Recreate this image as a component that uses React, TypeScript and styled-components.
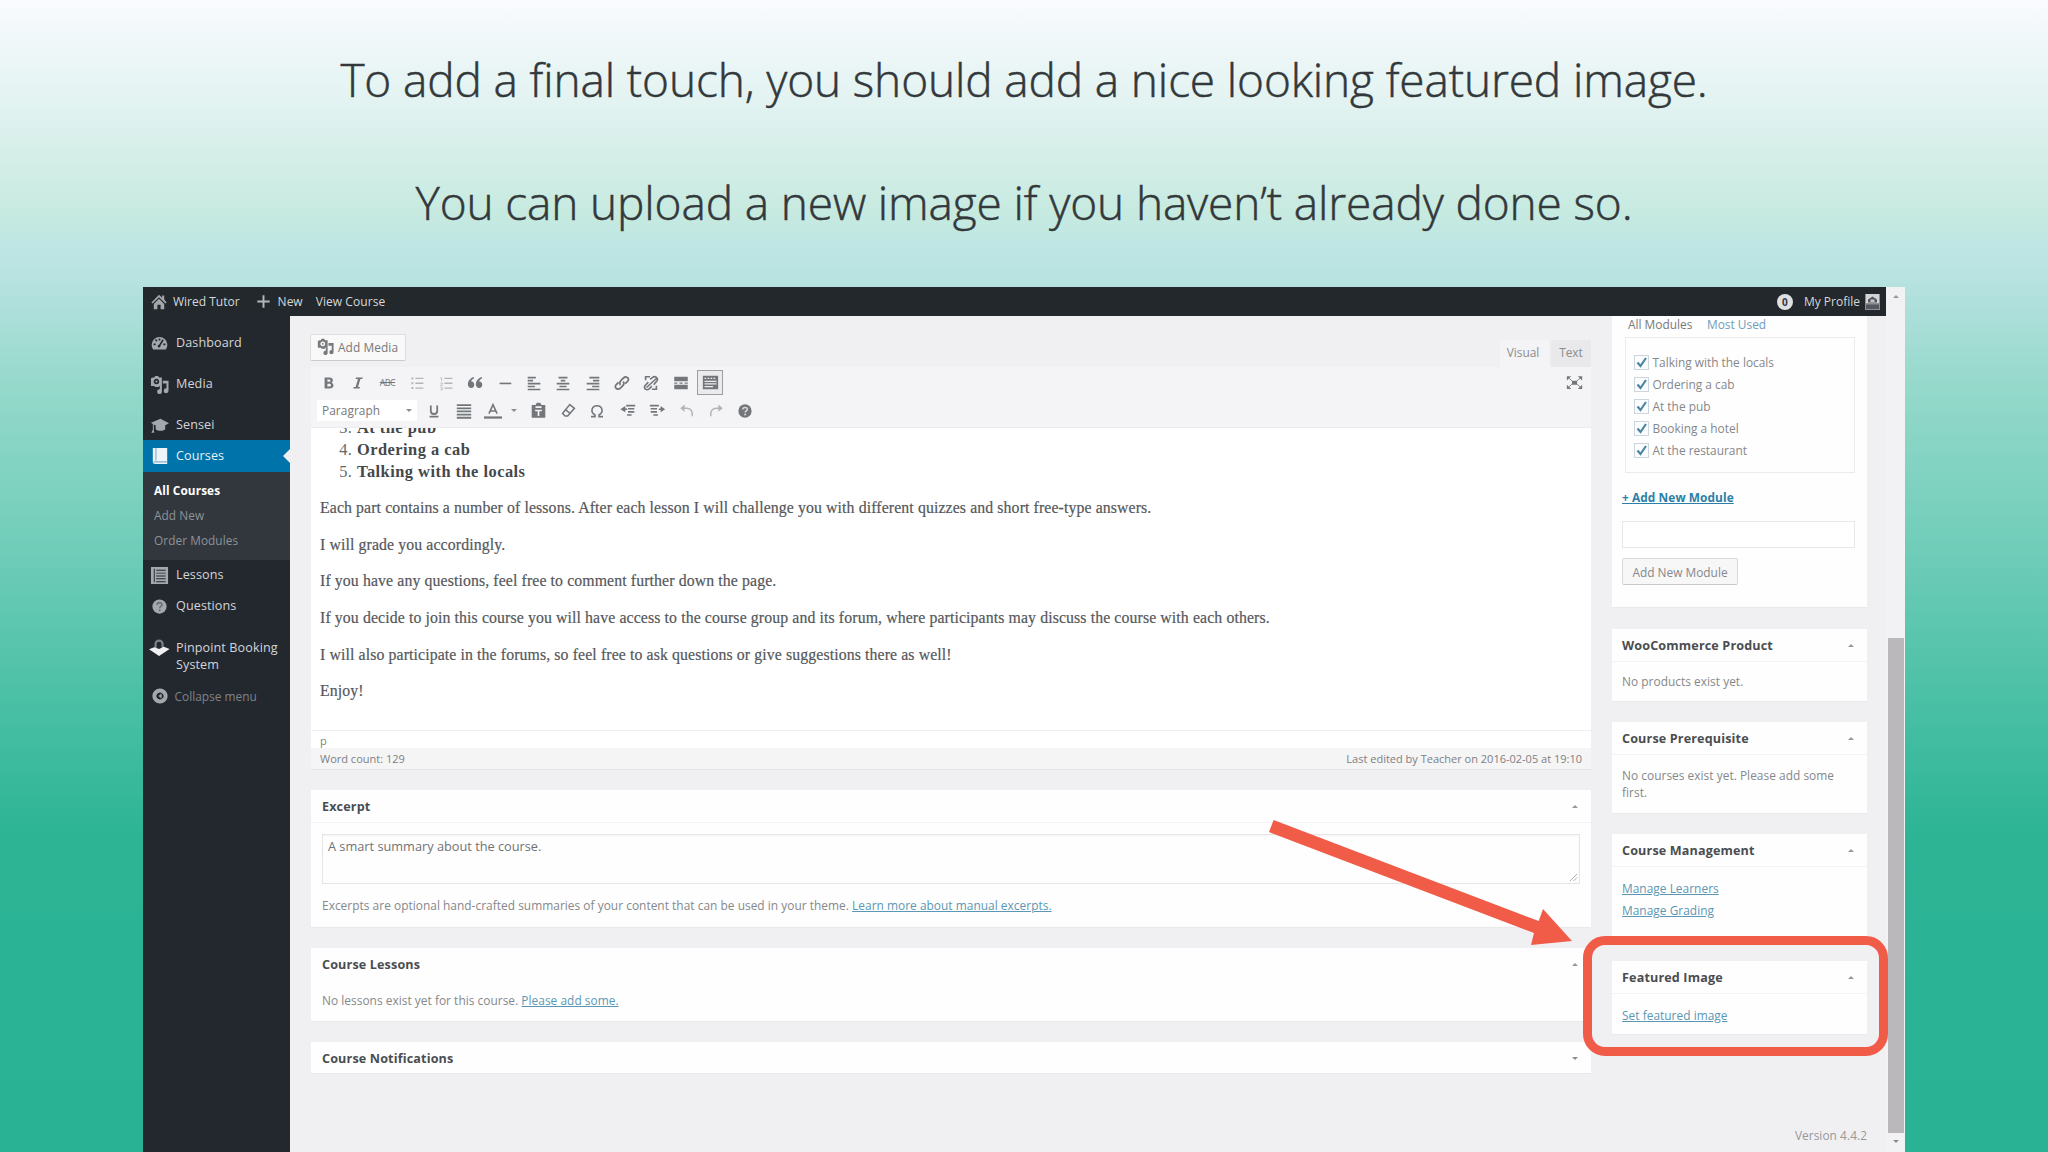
import React from "react";
import styled, { createGlobalStyle } from "styled-components";

const Global = createGlobalStyle`
  *, *::before, *::after { box-sizing: border-box; }
  body { margin: 0; overflow: hidden; }
`;

const sans = `"Open Sans", "Noto Sans", sans-serif`;
const serif = `"Liberation Serif", Georgia, serif`;
const accent = "#f15c48";

const Slide = styled.div`
  width: 2048px;
  height: 1152px;
  position: relative;
  overflow: hidden;
  display: flex;
  flex-direction: column;
  align-items: center;
  background: linear-gradient(#fafbff 0px, #f3f8fb 25px, #e5f4f3 90px, #d8efea 145px, #c6eae0 215px, #bfe6e4 245px, #b4e1de 290px, #95d9cb 385px, #6dccb7 560px, #4ac0a5 700px, #2cb495 840px, #29b294 1152px);
  font-family: ${sans};
`;

const Captions = styled.div`
  height: 287px;
  padding-top: 17.5px;
  display: flex;
  flex-direction: column;
  align-items: center;
`;

const Caption = styled.p`
  margin: 0;
  height: 123px;
  line-height: 122px;
  font-size: 46px;
  font-weight: 300;
  letter-spacing: -0.14px;
  -webkit-text-stroke: 0.5px #33383b;
  color: #33383b;
  white-space: nowrap;
`;

const Screen = styled.div`
  width: 1762px;
  height: 865px;
  display: flex;
  background: #f0f0f2;
`;

const Page = styled.div`
  width: 1743px;
  display: flex;
  flex-direction: column;
`;

const AdminBar = styled.header`
  height: 29px;
  flex: none;
  display: flex;
  align-items: center;
  padding: 0 6px 0 8px;
  background: #22282c;
  color: #d6d8d9;
  font-size: 12px;
`;

const BarItem = styled.span<{ $left?: number; $ls?: number }>`
  margin-left: ${(p) => p.$left ?? 0}px;
  letter-spacing: ${(p) => p.$ls ?? 0}px;
  white-space: nowrap;
`;

const Spacer = styled.span`
  flex: 1;
`;

const CountBubble = styled.span`
  width: 16px;
  height: 16px;
  border-radius: 50%;
  background: #dfe0e1;
  color: #33383c;
  font-size: 10px;
  font-weight: 700;
  line-height: 16px;
  text-align: center;
`;

const Body = styled.div`
  flex: 1;
  display: flex;
  min-height: 0;
`;

const Sidebar = styled.nav`
  width: 147px;
  flex: none;
  padding-top: 12px;
  background: #23282f;
`;

const MenuItem = styled.div<{ $h: number; $gap?: number; $active?: boolean; $muted?: boolean }>`
  position: relative;
  height: ${(p) => p.$h}px;
  margin-top: ${(p) => p.$gap ?? 0}px;
  padding-left: 6px;
  display: flex;
  align-items: center;
  gap: ${(p) => (p.$muted ? 4.5 : 6)}px;
  line-height: 16.5px;
  letter-spacing: ${(p) => (p.$muted ? 0 : 0.1)}px;
  background: ${(p) => (p.$active ? "#0073aa" : "transparent")};
  color: ${(p) => (p.$active ? "#e6f1f7" : p.$muted ? "#7f8286" : "#d3d5d7")};
  font-size: ${(p) => (p.$muted ? 11.9 : 12.6)}px;

  &::after {
    content: "";
    display: ${(p) => (p.$active ? "block" : "none")};
    position: absolute;
    right: 0;
    top: 9px;
    border: 7px solid transparent;
    border-left: 0;
    border-right-color: #f0f0f2;
  }
`;

const MenuIcon = styled.span<{ $raised?: boolean }>`
  width: 21px;
  flex: none;
  display: flex;
  justify-content: center;
  padding-bottom: ${(p) => (p.$raised ? 18 : 0)}px;
  color: #a4a8ac;
`;

const SubMenu = styled.div`
  height: 88px;
  padding: 6px 0 0 11px;
  background: #32373e;
`;

const SubItem = styled.div<{ $current?: boolean }>`
  height: 25px;
  line-height: 25px;
  font-size: 11.8px;
  letter-spacing: ${(p) => (p.$current ? 0.1 : 0.08)}px;
  font-weight: ${(p) => (p.$current ? 700 : 400)};
  color: ${(p) => (p.$current ? "#fff" : "#8f9296")};
`;

const Main = styled.main`
  width: 1301px;
  flex: none;
  padding: 18px 0 0 21px;
`;

const MediaRow = styled.div`
  height: 33px;
  display: flex;
  justify-content: space-between;
`;

const MediaButton = styled.button`
  width: 96px;
  height: 27px;
  margin: 0 0 0 -1px;
  padding: 0 0 2px 6px;
  display: flex;
  align-items: center;
  gap: 4px;
  border: 1px solid #dededf;
  border-bottom-color: #cacacc;
  border-radius: 2px;
  background: #f9f9fa;
  color: #77797b;
  font: 11.9px ${sans};
  letter-spacing: 0.08px;
  white-space: nowrap;
`;

const Tabs = styled.div`
  display: flex;
  gap: 2px;
  padding-top: 6px;
`;

const Tab = styled.div<{ $on?: boolean }>`
  width: ${(p) => (p.$on ? 49 : 40)}px;
  height: 27px;
  line-height: 25px;
  padding-right: ${(p) => (p.$on ? 3 : 0)}px;
  text-align: center;
  font-size: 11.9px;
  color: #8a8c8e;
  background: ${(p) => (p.$on ? "#f4f4f6" : "#e9e9eb")};
`;

const Editor = styled.section`
  width: 1280px;
  height: 403px;
  background: #fff;
  border-bottom: 1px solid #e4e4e6;
  display: flex;
  flex-direction: column;
`;

const Toolbar = styled.div`
  height: 61px;
  flex: none;
  background: #f4f4f6;
  border-bottom: 1px solid #ececee;
  color: #73777b;
`;

const ToolRow = styled.div<{ $h: number; $left: number }>`
  height: ${(p) => p.$h}px;
  padding-left: ${(p) => p.$left}px;
  padding-right: 5px;
  display: flex;
  align-items: center;
`;

const Tool = styled.span<{ $w?: number; $faded?: boolean; $pressed?: boolean }>`
  width: ${(p) => p.$w ?? 29.35}px;
  height: 25px;
  flex: none;
  display: flex;
  align-items: center;
  justify-content: center;
  opacity: ${(p) => (p.$faded ? 0.5 : 1)};
  ${(p) => (p.$pressed ? "border: 1px solid #9b9ea1; background: #ebebed; width: 26px; margin-left: 2px;" : "")}
`;

const FormatSelect = styled.div`
  width: 100px;
  height: 21px;
  margin-right: 2px;
  padding: 0 5px 1px 5px;
  display: flex;
  align-items: center;
  justify-content: space-between;
  background: #fff;
  color: #77797b;
  font-size: 11.9px;
  letter-spacing: 0.05px;
`;

const Caret = styled.span<{ $up?: boolean; $size?: number }>`
  width: 0;
  height: 0;
  border: ${(p) => p.$size ?? 3.5}px solid transparent;
  ${(p) => (p.$up ? "border-top: 0; border-bottom-color: #96989b;" : "border-bottom: 0; border-top-color: #8b8e91;")}
`;

const Document = styled.div`
  height: 302px;
  flex: none;
  overflow: hidden;
  padding: 0 9px;
  font-family: ${serif};
  font-size: 15.8px;
  color: #55585b;
`;

const List = styled.ol`
  margin: -11px 0 7px;
  padding: 0 0 0 37px;
  line-height: 22px;
`;

const ListItem = styled.li`
  height: 22px;
  font-size: 16.4px;
  font-weight: 700;
  letter-spacing: 0.48px;
  color: #44484b;
  &::marker { font-weight: 400; color: #66696c; }
`;

const Para = styled.p`
  margin: 0;
  height: 36.7px;
  line-height: 36.7px;
  letter-spacing: 0.115px;
  -webkit-text-stroke: 0.2px #55585b;
  white-space: nowrap;
`;

const PathRow = styled.div`
  height: 18px;
  line-height: 20px;
  padding-left: 9px;
  border-top: 1px solid #f0f0f1;
  font-size: 11px;
  color: #808285;
`;

const StatusRow = styled.div`
  flex: 1;
  display: flex;
  justify-content: space-between;
  align-items: center;
  padding: 0 9px;
  background: #f5f5f6;
  font-size: 11px;
  color: #7d8083;
`;

const Box = styled.section<{ $h: number; $gap: number }>`
  height: ${(p) => p.$h}px;
  margin-top: ${(p) => p.$gap}px;
  background: #fefefe;
  box-shadow: 0 1px 1px #e9e9eb;
`;

const BoxHead = styled.h3<{ $left: number; $right: number; $line?: boolean }>`
  margin: 0;
  height: 33px;
  padding: 0 ${(p) => p.$right}px 0 ${(p) => p.$left}px;
  display: flex;
  align-items: center;
  justify-content: space-between;
  border-bottom: 1px solid ${(p) => (p.$line === false ? "transparent" : "#f3f3f4")};
  font-size: 12.6px;
  font-weight: 700;
  letter-spacing: 0.14px;
  color: #4a4d50;
`;

const ExcerptArea = styled.div`
  position: relative;
  margin: 11px 11px 0 11px;
  height: 50px;
  padding: 2px 5px;
  border: 1px solid #e6e6e8;
  box-shadow: inset 0 1px 2px #f3f3f4;
  font-size: 12.75px;
  line-height: 18px;
  color: #707376;
`;

const Grip = styled.svg`
  position: absolute;
  right: 1px;
  bottom: 1px;
`;

const Note = styled.p<{ $left?: number; $h: number; $top?: number }>`
  margin: 0;
  padding: ${(p) => p.$top ?? 0}px 20px 0 ${(p) => p.$left ?? 11}px;
  line-height: ${(p) => p.$h}px;
  font-size: 11.9px;
  letter-spacing: 0.03px;
  color: #85888b;
`;

const Link = styled.a<{ $bold?: boolean }>`
  color: ${(p) => (p.$bold ? "#2c7fa6" : "#5b97b4")};
  font-weight: ${(p) => (p.$bold ? 700 : 400)};
  text-decoration: underline;
`;

const Aside = styled.aside`
  width: 276px;
  padding-left: 21px;
  flex: none;
`;

const ModulesBox = styled(Box)`
  padding: 0 12px 0 10px;
`;

const ModuleTabs = styled.div`
  height: 21px;
  padding-left: 6px;
  display: flex;
  font-size: 11.9px;
  line-height: 16px;
`;

const ModuleTab = styled.span<{ $other?: boolean }>`
  width: ${(p) => (p.$other ? "auto" : "79px")};
  color: ${(p) => (p.$other ? "#6f9dbb" : "#77797b")};
`;

const CheckList = styled.div`
  height: 136px;
  margin-left: 3px;
  padding: 13px 0 0 8px;
  border: 1px solid #ebebed;
`;

const CheckRow = styled.label`
  height: 22.1px;
  display: flex;
  align-items: center;
  gap: 3.5px;
  font-size: 11.9px;
  color: #85888b;
`;

const CheckMark = styled.span`
  width: 15px;
  height: 15px;
  border: 1px solid #cdd6dc;
  background: #fbfcfd;
  display: flex;
`;

const AddLinkRow = styled.div`
  height: 48px;
  line-height: 48px;
  font-size: 11.9px;
  letter-spacing: 0.06px;
`;

const NameInput = styled.div`
  height: 27px;
  border: 1px solid #e8e8ea;
  background: #fff;
`;

const AddButton = styled.button`
  width: 116px;
  height: 27px;
  margin-top: 10px;
  padding: 0;
  border: 1px solid #d9d9db;
  border-bottom-color: #c8c8ca;
  border-radius: 2px;
  background: #f7f7f8;
  color: #85888b;
  font: 11.9px ${sans};
`;

const LinkList = styled.div`
  padding: 10px 0 0 10px;
  font-size: 11.9px;
  line-height: 22.3px;
  letter-spacing: 0.03px;
  display: flex;
  flex-direction: column;
  align-items: flex-start;
`;

const Version = styled.div`
  margin-top: 92px;
  text-align: right;
  font-size: 11.9px;
  letter-spacing: 0.05px;
  line-height: 18px;
  color: #96989b;
`;

const Scrollbar = styled.div`
  width: 19px;
  height: 865px;
  padding: 8px 0 7px;
  display: flex;
  flex-direction: column;
  align-items: center;
  background: #f2f2f4;
`;

const Thumb = styled.div`
  width: 16px;
  height: 495px;
  margin: 340px 0 7px;
  background: #bab8bb;
`;

const Highlight = styled.div`
  position: absolute;
  left: 1583px;
  top: 936px;
  width: 305px;
  height: 120px;
  border: 9.5px solid ${accent};
  border-radius: 22px;
`;

const Arrow = styled.svg`
  position: absolute;
  left: 1260px;
  top: 810px;
`;

type IconProps = { size?: number; children: React.ReactNode };
const Icon = ({ size = 18, children }: IconProps) => (
  <svg width={size} height={size} viewBox="0 0 20 20" fill="currentColor">
    {children}
  </svg>
);
const Stroke = ({ d, w = 2 }: { d: string; w?: number }) => (
  <path d={d} fill="none" stroke="currentColor" strokeWidth={w} />
);

const HomeIcon = () => (
  <Icon size={16}>
    <path
      fill="#a4a8ac"
      d="M10 1 0.500 10.500 2 12l8-8 8 8 1.500-1.500L16.500 7V2H14v2.800zM3.500 12.500V19H8v-5.500h4V19h4.500v-6.500L10 6z"
    />
  </Icon>
);
const PlusIcon = () => (
  <Icon size={13}>
    <path fill="#b4b7ba" d="M8.500 0.500h3v8h8v3h-8v8h-3v-8h-8v-3h8z" />
  </Icon>
);
const DashboardIcon = () => (
  <Icon size={17}>
    <path
      fillRule="evenodd"
      d="M2.500 17A9.200 9.200 0 1 1 17.500 17zM9 4h2v2.500H9zM4.600 6l1.500-1.200 1.500 2L6 8zM3 10h2.500v2H3zM14.500 10H17v2h-2.500zM13.500 5l1.500 1.200-4 6.300a1.600 1.600 0 1 1-1.500-1z"
    />
  </Icon>
);
const MediaIcon = ({ size = 19 }: { size?: number }) => (
  <Icon size={size}>
    <path
      fillRule="evenodd"
      d="M3 2.500h1.500L5.500 1h3l1 1.500H12.500V11.500H9.500v1H5V11.500H1V3.500zM6.800 4a2.900 2.900 0 1 0 .01 0z"
    />
    <circle cx="6.800" cy="6.900" r="1.100" />
    <path d="M13.500 6H19.500v10.500a2.500 2.500 0 1 1-2.200-2.400V9h-3.800zM10.300 11.500h2.200v6a2.500 2.500 0 1 1-2.200-2.400z" />
  </Icon>
);
const SenseiIcon = () => (
  <Icon size={19}>
    <path d="M11 3 1 7.200 3 8.300V14c0 1-.8 2-1.500 3.500h3C4 16 4 15 4 14V9l2 .9V14c2 2.200 8 2.200 10 0V9.800L20 7.500z" />
  </Icon>
);
const BookIcon = () => (
  <Icon size={18}>
    <path fill="#eef4f8" d="M2 1h16v18H4.500A2.500 2.500 0 0 1 2 16.500z" />
    <path fill="none" stroke="#7fb2cf" strokeWidth="1.300" d="M5.500 1v14M3 16.500h15" />
  </Icon>
);
const LessonsIcon = () => (
  <Icon size={19}>
    <path
      fillRule="evenodd"
      d="M1 1h18v18H1zM6.500 4v1h10V4zM6.500 7v1h10V7zM6.500 10v1h10v-1zM6.500 13v1h10v-1zM6.500 16v1h10v-1zM4 3h1v14H4z"
    />
  </Icon>
);
const HelpIcon = ({ size = 15, mark = "#23282f" }: { size?: number; mark?: string }) => (
  <Icon size={size}>
    <circle cx="10" cy="10" r="9.500" />
    <path d="M6.800 8c0-4.200 6.600-4 6.500-.4 0 2.300-3 2.300-3 4.600" fill="none" stroke={mark} strokeWidth="2.200" />
    <circle cx="10.200" cy="15" r="1.400" fill={mark} />
  </Icon>
);
const PinpointIcon = () => (
  <svg width="24" height="20" viewBox="0 0 24 20">
    <path d="M7.500 10V5.500a4 4 0 0 1 8 0V10" fill="none" stroke="#7d8185" strokeWidth="2.500" />
    <path d="M0 11.500 6 9l5.500 2L17 8.500 23.500 11 11.500 19z" fill="#f0f0f2" />
  </svg>
);
const CollapseIcon = () => (
  <Icon size={16}>
    <path fillRule="evenodd" d="M10 .5a9.500 9.500 0 1 0 .01 0zM10 5.500a4.500 4.500 0 1 1-.01 0z" />
    <path d="M12 7v6l-4-3z" />
  </Icon>
);

const tools1 = {
  bold: (
    <path
      fillRule="evenodd"
      d="M4.500 3h6.300c5 0 5.200 5.300 2 6.500 4.300 1.300 3.500 7.500-1.800 7.500H4.500zM8 5.500v3h2.200c2.300 0 2.300-3 0-3zM8 11v3.500h2.500c2.700 0 2.700-3.500 0-3.500z"
    />
  ),
  italic: <path d="M7.500 3H16l-.5 2H13l-3 10h2.500l-.6 2H4l.6-2H7l3-10H7z" />,
  ul: (
    <>
      <path d="M3 3h2.500v2.500H3zM3 9h2.500v2.500H3zM3 15h2.500v2.500H3z" />
      <Stroke d="M8 4.300h10M8 10.300h10M8 16.300h10" w={1.6} />
    </>
  ),
  ol: (
    <>
      <Stroke d="M3 3.500h1.500v4M3 10h2.500v1.500L3 13.500h2.500M3 16h2.500v2.500H3" w={1} />
      <Stroke d="M8 4.300h10M8 10.300h10M8 16.300h10" w={1.6} />
    </>
  ),
  quote: (
    <path d="M9 4C5.800 5.300 5.300 7.500 5.300 8.200c5-.3 5 8 0 8-6.500 0-5.500-11 3-13.700zM19 4c-3.200 1.300-3.700 3.500-3.700 4.200 5-.3 5 8 0 8-6.500 0-5.500-11 3-13.700z" />
  ),
  hr: <Stroke d="M4 10.500h13" w={1.8} />,
  left: <Stroke d="M3 4h9M3 7.300h6M3 10.600h14M3 13.900h8M3 17.200h14" w={1.9} />,
  center: <Stroke d="M5 4h10M7.500 7.300h5M3 10.600h14M6 13.900h8M3 17.200h14" w={1.9} />,
  right: <Stroke d="M6 4h11M10 7.300h7M3 10.600h14M9 13.900h8M3 17.200h14" w={1.9} />,
  link: (
    <>
      <Stroke d="M8.500 12c-3-2 .5-5 3-7.500s7.500 0 5 3.300l-2.800 3" />
      <Stroke d="M11 8.500c3 2-.5 5-3 7.300s-7.300-.5-4.700-3.600L6 9.300" />
    </>
  ),
  unlink: (
    <Stroke
      d="M4 7V3h5M16 13v4h-5M9 6l2.500-2c3-2.500 7.500.5 5 3.800L13 12M7 9l-3.700 4C1.500 16 5 19 8 16.500l3-3M5 15 16 5"
      w={1.8}
    />
  ),
  more: <path d="M2.500 3h15v5h-15zM2.500 12h15v5h-15zM2.500 9.400h3.500v1.400H2.500zM8.200 9.400h3.600v1.400H8.200zM14 9.400h3.500v1.400H14z" />,
  sink: (
    <path
      fillRule="evenodd"
      d="M1 2h18v16H1zM3 4.500V6h2V4.500zM6.500 4.500V6h2V4.500zM10 4.500V6h2V4.500zM13.500 4.500V6h2V4.500zM3 8v1.300h14V8zM3 11v1.300h14V11zM3 14.200v1.300h10v-1.300z"
    />
  ),
};

const tools2 = {
  underline: <Stroke d="M6 3v7c0 5 8 5 8 0V3M4.500 17h11" w={2.2} />,
  justify: <Stroke d="M2 3.500h16M2 7h16M2 10.500h16M2 14h16M2 17.500h16" w={2} />,
  color: (
    <>
      <Stroke d="M5.500 13 10 3l4.500 10M7.500 10h5" w={1.8} />
      <path d="M0 16h20v2.500H0z" />
    </>
  ),
  paste: (
    <path fillRule="evenodd" d="M2 3.500h4.500L8 1h4l1.500 2.500H18V18.500H2zM6.500 5v2h7V5zM6 9v2h3v5.500h2V11h3V9z" />
  ),
  eraser: <Stroke d="M11.500 3 17 7.500 9 16.500H6L3 13.500zM6.500 9l5.500 4.500" w={1.8} />,
  omega: <Stroke d="M2.500 17h5v-2C1 11 3.500 3.500 10 3.500S19 11 12.500 15v2h5" />,
  outdent: (
    <>
      <Stroke d="M8 4h10M10 7.500h7M10 11h7M9 14.500h5" w={1.8} />
      <path d="M7 4.500v7L1.500 8z" />
      <Stroke d="M5 8h4" w={1.8} />
    </>
  ),
  indent: (
    <>
      <Stroke d="M2 4h10M3 7.500h7M3 11h7M6 14.500h5M12 8h4" w={1.8} />
      <path d="M14 4.500v7l5-3.500z" />
    </>
  ),
  undo: (
    <>
      <Stroke d="M5 6.500h5c5 0 7 4 6.500 10" w={1.8} />
      <path d="M7 2v9L1.500 6.500z" />
    </>
  ),
  redo: (
    <>
      <Stroke d="M15 6.500h-5c-5 0-7 4-6.500 10" w={1.8} />
      <path d="M13 2v9l5.500-4.500z" />
    </>
  ),
};

const Strike = styled.span`
  font-size: 9px;
  letter-spacing: -0.6px;
  text-decoration: line-through;
`;

const FullscreenIcon = () => (
  <Icon size={17}>
    <path d="M1 2.500h5L1 7.500zM19 2.500h-5l5 5zM1 17.500h5l-5-5zM19 17.500h-5l5-5zM7 8h6v4.500H7z" />
    <Stroke d="m3 4.500 4 3.500M17 4.500 13 8M3 15.500l4-3.500M17 15.500 13 12" w={1} />
  </Icon>
);

const Checked = () => (
  <CheckMark>
    <svg width="13" height="13" viewBox="0 0 13 13">
      <path d="m2.500 6.500 3 3.500 5.500-8" fill="none" stroke="#4c86a3" strokeWidth="2.200" />
    </svg>
  </CheckMark>
);

const modules = ["Talking with the locals", "Ordering a cab", "At the pub", "Booking a hotel", "At the restaurant"];

const SideHead = ({ children }: { children: string }) => (
  <BoxHead $left={10} $right={13}>
    {children}
    <Caret $up />
  </BoxHead>
);

export default function App() {
  return (
    <Slide>
      <Global />
      <Captions>
        <Caption>To add a final touch, you should add a nice looking featured image.</Caption>
        <Caption>You can upload a new image if you haven’t already done so.</Caption>
      </Captions>
      <Screen>
        <Page>
          <AdminBar>
            <HomeIcon />
            <BarItem $left={6}>Wired Tutor</BarItem>
            <BarItem $left={17} />
            <PlusIcon />
            <BarItem $left={8}>New</BarItem>
            <BarItem $left={13} $ls={0.07}>View Course</BarItem>
            <Spacer />
            <CountBubble>0</CountBubble>
            <BarItem $left={11}>My Profile</BarItem>
            <BarItem $left={5} />
            <svg width="15" height="16" viewBox="0 0 15 16">
              <path d="M0 0h15v16H0z" fill="#8d9094" />
              <path d="M1 0h13v9H1z" fill="#d3d4d7" />
              <path d="M3 8.500V5.500l4.500-3 4.500 3v3zM1 10.500h13v4.500H1z" fill="#54575d" />
              <path d="M5.500 5.500h4v2.500h-4z" fill="#c4c5c9" />
            </svg>
          </AdminBar>
          <Body>
            <Sidebar>
              <MenuItem $h={30}><MenuIcon><DashboardIcon /></MenuIcon>Dashboard</MenuItem>
              <MenuItem $h={30} $gap={11}><MenuIcon><MediaIcon /></MenuIcon>Media</MenuItem>
              <MenuItem $h={30} $gap={11}><MenuIcon><SenseiIcon /></MenuIcon>Sensei</MenuItem>
              <MenuItem $h={32} $active><MenuIcon><BookIcon /></MenuIcon>Courses</MenuItem>
              <SubMenu>
                <SubItem $current>All Courses</SubItem>
                <SubItem>Add New</SubItem>
                <SubItem>Order Modules</SubItem>
              </SubMenu>
              <MenuItem $h={31}><MenuIcon><LessonsIcon /></MenuIcon>Lessons</MenuItem>
              <MenuItem $h={31}><MenuIcon><HelpIcon mark="#6b7075" /></MenuIcon>Questions</MenuItem>
              <MenuItem $h={49} $gap={10}><MenuIcon $raised><PinpointIcon /></MenuIcon>Pinpoint Booking<br />System</MenuItem>
              <MenuItem $h={30} $muted><MenuIcon><CollapseIcon /></MenuIcon>Collapse menu</MenuItem>
            </Sidebar>
            <Main>
              <MediaRow>
                <MediaButton><MediaIcon size={17} />Add Media</MediaButton>
                <Tabs>
                  <Tab $on>Visual</Tab>
                  <Tab>Text</Tab>
                </Tabs>
              </MediaRow>
              <Editor>
                <Toolbar>
                  <ToolRow $h={31} $left={3}>
                    <Tool><Icon size={16}>{tools1.bold}</Icon></Tool>
                    <Tool><Icon size={16}>{tools1.italic}</Icon></Tool>
                    <Tool><Strike>ABC</Strike></Tool>
                    <Tool $faded><Icon size={16}>{tools1.ul}</Icon></Tool>
                    <Tool $faded><Icon size={16}>{tools1.ol}</Icon></Tool>
                    <Tool><Icon size={16}>{tools1.quote}</Icon></Tool>
                    <Tool><Icon>{tools1.hr}</Icon></Tool>
                    <Tool><Icon>{tools1.left}</Icon></Tool>
                    <Tool><Icon>{tools1.center}</Icon></Tool>
                    <Tool><Icon>{tools1.right}</Icon></Tool>
                    <Tool><Icon>{tools1.link}</Icon></Tool>
                    <Tool><Icon>{tools1.unlink}</Icon></Tool>
                    <Tool><Icon>{tools1.more}</Icon></Tool>
                    <Tool $pressed><Icon size={17}>{tools1.sink}</Icon></Tool>
                    <Spacer />
                    <Tool $w={24}><FullscreenIcon /></Tool>
                  </ToolRow>
                  <ToolRow $h={25} $left={6}>
                    <FormatSelect>Paragraph<Caret /></FormatSelect>
                    <Tool><Icon size={16}>{tools2.underline}</Icon></Tool>
                    <Tool $w={31}><Icon>{tools2.justify}</Icon></Tool>
                    <Tool $w={28}><Icon size={18}>{tools2.color}</Icon></Tool>
                    <Tool $w={14}><Caret /></Tool>
                    <Tool $w={35}><Icon size={17}>{tools2.paste}</Icon></Tool>
                    <Tool $w={24}><Icon size={17}>{tools2.eraser}</Icon></Tool>
                    <Tool $w={34}><Icon size={16}>{tools2.omega}</Icon></Tool>
                    <Tool $w={27}><Icon>{tools2.outdent}</Icon></Tool>
                    <Tool $w={30.5}><Icon>{tools2.indent}</Icon></Tool>
                    <Tool $faded><Icon size={16}>{tools2.undo}</Icon></Tool>
                    <Tool $faded><Icon size={16}>{tools2.redo}</Icon></Tool>
                    <Tool><HelpIcon size={14} mark="#d9dadc" /></Tool>
                  </ToolRow>
                </Toolbar>
                <Document>
                  <List start={3}>
                    <ListItem>At the pub</ListItem>
                    <ListItem>Ordering a cab</ListItem>
                    <ListItem>Talking with the locals</ListItem>
                  </List>
                  <Para>Each part contains a number of lessons. After each lesson I will challenge you with different quizzes and short free-type answers.</Para>
                  <Para>I will grade you accordingly.</Para>
                  <Para>If you have any questions, feel free to comment further down the page.</Para>
                  <Para>If you decide to join this course you will have access to the course group and its forum, where participants may discuss the course with each others.</Para>
                  <Para>I will also participate in the forums, so feel free to ask questions or give suggestions there as well!</Para>
                  <Para>Enjoy!</Para>
                </Document>
                <PathRow>p</PathRow>
                <StatusRow>
                  <span>Word count: 129</span>
                  <span>Last edited by Teacher on 2016-02-05 at 19:10</span>
                </StatusRow>
              </Editor>
              <Box $h={137} $gap={20}>
                <BoxHead $left={11} $right={13}>Excerpt<Caret $up /></BoxHead>
                <ExcerptArea>
                  A smart summary about the course.
                  <Grip width="9" height="9" viewBox="0 0 9 9">
                    <path d="M1 8 8 1M4.500 8 8 4.500" stroke="#a9abad" />
                  </Grip>
                </ExcerptArea>
                <Note $h={43}>
                  Excerpts are optional hand-crafted summaries of your content that can be used in your theme. <Link>Learn more about manual excerpts.</Link>
                </Note>
              </Box>
              <Box $h={73} $gap={21}>
                <BoxHead $left={11} $right={13} $line={false}>Course Lessons<Caret $up /></BoxHead>
                <Note $h={39}>No lessons exist yet for this course. <Link>Please add some.</Link></Note>
              </Box>
              <Box $h={31} $gap={21}>
                <BoxHead $left={11} $right={13} $line={false}>Course Notifications<Caret /></BoxHead>
              </Box>
            </Main>
            <Aside>
              <ModulesBox $h={291} $gap={0}>
                <ModuleTabs>
                  <ModuleTab>All Modules</ModuleTab>
                  <ModuleTab $other>Most Used</ModuleTab>
                </ModuleTabs>
                <CheckList>
                  {modules.map((name) => (
                    <CheckRow key={name}><Checked />{name}</CheckRow>
                  ))}
                </CheckList>
                <AddLinkRow><Link $bold>+ Add New Module</Link></AddLinkRow>
                <NameInput />
                <AddButton>Add New Module</AddButton>
              </ModulesBox>
              <Box $h={72} $gap={22}>
                <SideHead>WooCommerce Product</SideHead>
                <Note $left={10} $h={39}>No products exist yet.</Note>
              </Box>
              <Box $h={91} $gap={21}>
                <SideHead>Course Prerequisite</SideHead>
                <Note $left={10} $h={17} $top={12}>No courses exist yet. Please add some first.</Note>
              </Box>
              <Box $h={105} $gap={21}>
                <SideHead>Course Management</SideHead>
                <LinkList>
                  <Link>Manage Learners</Link>
                  <Link>Manage Grading</Link>
                </LinkList>
              </Box>
              <Box $h={73} $gap={22}>
                <SideHead>Featured Image</SideHead>
                <LinkList><Link>Set featured image</Link></LinkList>
              </Box>
              <Version>Version 4.4.2</Version>
            </Aside>
          </Body>
        </Page>
        <Scrollbar>
          <Caret $up />
          <Thumb />
          <Caret />
        </Scrollbar>
      </Screen>
      <Arrow width="330" height="150" viewBox="1260 810 330 150">
        <path d="M1273.600 820 1538.700 921 1543 909 1572 941 1531 945 1534 933 1269 832z" fill={accent} />
      </Arrow>
      <Highlight />
    </Slide>
  );
}
